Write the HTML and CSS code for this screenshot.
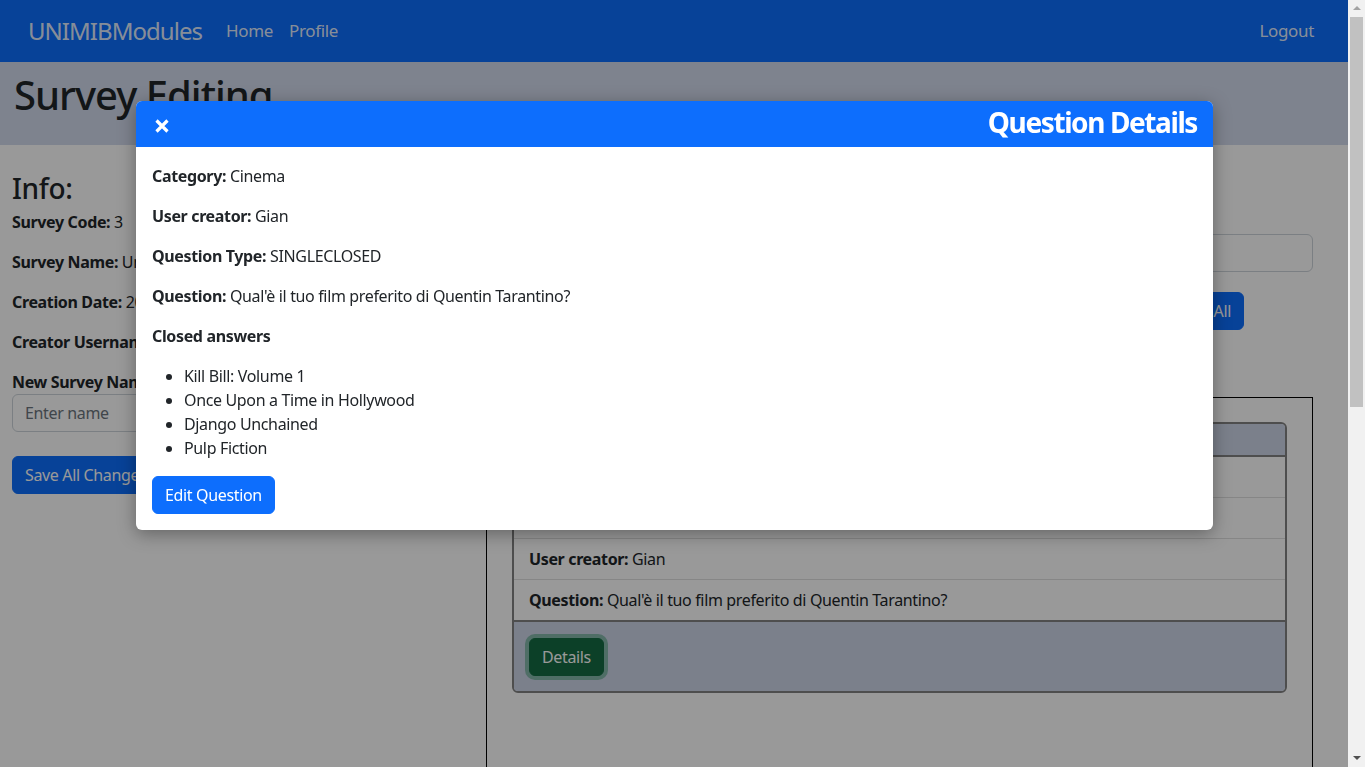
FILE: index.html
```html
<!DOCTYPE html>
<html lang="en">
<head>
<meta charset="utf-8">
<title>Survey Editing</title>
<link rel="stylesheet" href="styles.css">
</head>
<body>
<nav class="navbar">
  <a class="brand" href="#">UNIMIBModules</a>
  <a class="nav-link" href="#">Home</a>
  <a class="nav-link" href="#">Profile</a>
  <a class="nav-link logout" href="#">Logout</a>
</nav>
<header class="page-head">
  <h1>Survey Editing</h1>
</header>
<main class="content">
  <section class="info">
    <h3>Info:</h3>
    <p><b>Survey Code:</b> 3</p>
    <p><b>Survey Name:</b> Untitled Survey</p>
    <p><b>Creation Date:</b> 2021-06-15</p>
    <p><b>Creator Username:</b> Gian</p>
    <label class="field-label">New Survey Name</label>
    <input class="form-control" type="text" placeholder="Enter name">
    <button class="btn btn-primary save">Save All Changes</button>
  </section>
  <section class="questions">
    <h3>Questions:</h3>
    <input class="form-control" type="text" placeholder="Search question">
    <div class="actions">
      <button class="btn btn-primary">Select All</button>
    </div>
    <div class="box">
      <div class="card">
        <div class="card-header">Question 1</div>
        <ul class="list-group">
          <li><b>ID:</b> 1</li>
          <li><b>Category:</b> Cinema</li>
          <li><b>User creator:</b> Gian</li>
          <li><b>Question:</b> Qual'è il tuo film preferito di Quentin Tarantino?</li>
        </ul>
        <div class="card-footer">
          <button class="btn btn-success focused">Details</button>
        </div>
      </div>
    </div>
  </section>
</main>

<div class="backdrop"></div>
<div class="modal">
  <div class="modal-header">
    <span class="close" aria-label="Close">
      <svg width="16" height="16" viewBox="0 0 16 16"><path d="M2.5 2.5 L13.5 13.5 M13.5 2.5 L2.5 13.5" stroke="#fff" stroke-width="3.2" stroke-linecap="butt" fill="none"/></svg>
    </span>
    <h2 class="modal-title">Question Details</h2>
  </div>
  <div class="modal-body">
    <p><b>Category:</b> Cinema</p>
    <p><b>User creator:</b> Gian</p>
    <p><b>Question Type:</b> SINGLECLOSED</p>
    <p><b>Question:</b> Qual'è il tuo film preferito di Quentin Tarantino?</p>
    <p><b>Closed answers</b></p>
    <ul class="answers">
      <li>Kill Bill: Volume 1</li>
      <li>Once Upon a Time in Hollywood</li>
      <li>Django Unchained</li>
      <li>Pulp Fiction</li>
    </ul>
    <button class="btn btn-primary">Edit Question</button>
  </div>
</div>

<div class="scrollbar" aria-hidden="true">
  <span class="arrow up"></span>
  <span class="thumb"></span>
  <span class="arrow down"></span>
</div>
</body>
</html>
```

FILE: styles.css
```css
* { box-sizing: border-box; }
html, body { margin: 0; }
body {
  font-family: "Noto Sans", "Open Sans", sans-serif;
  font-size: 16px;
  line-height: 24px;
  letter-spacing: -0.022em;
  color: #212529;
  background: #fff;
  margin-right: 17px;
}
b { font-weight: 700; }
p { margin: 0 0 16px; }

.navbar {
  height: 62px;
  background: #0d6efd;
  display: flex;
  align-items: center;
  padding: 0 26px 0 28px;
}
.navbar a { text-decoration: none; color: rgba(255,255,255,0.9); }
.brand { font-size: 24px; line-height: 36px; margin-right: 16px; letter-spacing: -0.04em; }
.nav-link { font-size: 17px; padding: 0 8px; }
.logout { margin-left: auto; }

.page-head {
  background: #d3dbed;
  height: 83px;
  padding: 9px 14px 0;
}
.page-head h1 {
  margin: 0;
  font-size: 40px;
  line-height: 48px;
  font-weight: 500;
  letter-spacing: -0.025em;
}

.content {
  display: grid;
  grid-template-columns: 462px 827px;
  column-gap: 12px;
  padding: 26px 12px 0;
}
h3 {
  margin: 0 0 5px;
  font-size: 28px;
  line-height: 34px;
  font-weight: 500;
}
.field-label { display: block; font-weight: 700; margin-bottom: 0; }
.form-control {
  display: block;
  width: 100%;
  height: 38px;
  padding: 6px 12px;
  font: inherit;
  letter-spacing: inherit;
  color: #212529;
  border: 1px solid #ced4da;
  border-radius: 6px;
}
.form-control::placeholder { color: #6c757d; }
.btn {
  font: inherit;
  letter-spacing: inherit;
  border: 1px solid transparent;
  border-radius: 6px;
  padding: 6px 12px;
  line-height: 24px;
  color: #fff;
}
.btn-primary { background: #0d6efd; border-color: #0d6efd; }
.btn-success { background: #146c43; border-color: #146c43; }
.focused { box-shadow: 0 0 0 4px rgba(60,153,110,0.5); }
.save { margin-top: 24px; }

.questions h3 { margin-bottom: 29px; }
.actions { display: flex; justify-content: flex-end; margin: 20px 69px 0 0; }
.box {
  margin-top: 67px;
  border: 1px solid #000;
  padding: 24px 25px;
  min-height: 1040px;
}
.card {
  border: 2px solid #828282;
  border-radius: 6px;
  overflow: hidden;
}
.card-header {
  background: #cdd5e8;
  padding: 4px 14px 3px;
  line-height: 24px;
  border-bottom: 2px solid #828282;
}
.list-group { list-style: none; margin: 0; padding: 0; }
.list-group li {
  padding: 8px 15px;
  border-bottom: 1px solid #dfdfdf;
}
.list-group li:last-child { border-bottom: 0; }
.card-footer {
  background: #cdd5e8;
  border-top: 2px solid #828282;
  padding: 16px 15px 15px;
}

.backdrop {
  position: fixed;
  top: 0;
  left: 0;
  bottom: 0;
  right: 17px;
  background: rgba(0,0,0,0.4);
}
.modal {
  position: fixed;
  top: 101px;
  left: 136px;
  width: 1077px;
  background: #fff;
  border-radius: 6px;
  box-shadow: 0 4px 18px rgba(0,0,0,0.35);
  overflow: hidden;
}
.modal-header {
  background: #0d6efd;
  height: 46px;
  display: flex;
  align-items: center;
  justify-content: space-between;
  padding: 0 16px 0 18px;
}
.close { display: flex; margin-top: 4px; }
.modal-title {
  margin: 0 0 4px;
  color: #fff;
  font-size: 28px;
  line-height: 34px;
  font-weight: 700;
  letter-spacing: -0.05em;
}
.modal-body { padding: 17px 16px 16px; }
.answers { margin: 0 0 16px; padding-left: 32px; }

.scrollbar {
  position: fixed;
  top: 0;
  right: 0;
  width: 17px;
  height: 100vh;
  background: #f1f1f1;
  display: flex;
  flex-direction: column;
  align-items: center;
}
.arrow {
  width: 0;
  height: 0;
  border-left: 4px solid transparent;
  border-right: 4px solid transparent;
  flex: none;
}
.arrow.up { border-bottom: 4px solid #a3a3a3; margin: 6px 0 7px; }
.arrow.down { border-top: 4px solid #505050; margin: auto 0 7px; }
.thumb {
  width: 13px;
  height: 390px;
  background: #c1c1c1;
  flex: none;
}
```
